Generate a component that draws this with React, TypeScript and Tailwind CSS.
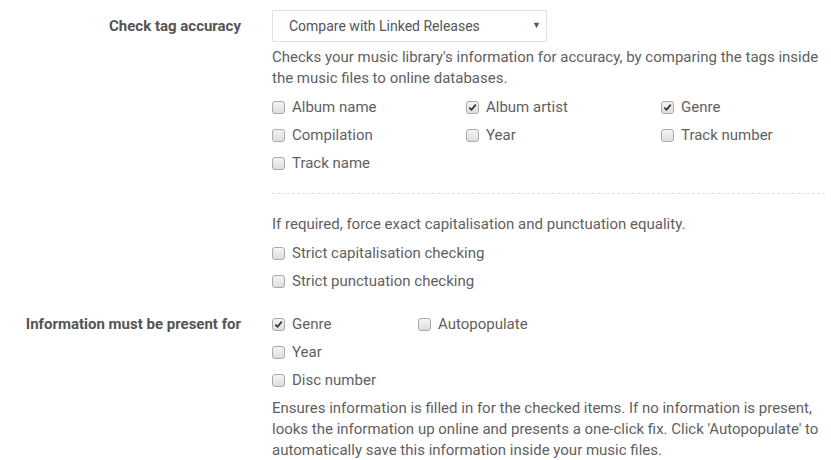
import React from 'react';

interface CheckProps {
  label: string;
  checked?: boolean;
}

function Check({ label, checked = false }: CheckProps) {
  return (
    <label className="flex h-[28px] items-center gap-[7px] whitespace-nowrap">
      <span className="relative flex h-[13px] w-[13px] shrink-0 items-center justify-center rounded-[3px] border border-[#a9a9a9] bg-gradient-to-b from-[#f4f4f4] to-[#dedede]">
        {checked && (
          <svg viewBox="0 0 10 10" className="h-[9px] w-[9px]">
            <path d="M1.5 5.2 L3.9 7.6 L8.6 1.8" fill="none" stroke="#333" strokeWidth={1.9} />
          </svg>
        )}
      </span>
      <span>{label}</span>
    </label>
  );
}

export default function App() {
  return (
    <div
      className="min-h-[460px] w-[831px] bg-white text-[15px] text-[#5f5f5f]"
      style={{ fontFamily: 'Roboto, "Liberation Sans", sans-serif' }}
    >
      <div className="grid grid-cols-[241px_553px] gap-x-[31px] pt-[10px]">
        {/* Check tag accuracy */}
        <div className="flex h-[32px] items-center justify-end font-bold text-[#555]">
          Check tag accuracy
        </div>
        <div className="flex flex-col">
          <div className="relative flex h-[32px] w-[275px] items-center border border-[#e3e3e3] pl-[16px] text-[14px] text-[#555]">
            Compare with Linked Releases
            <span className="absolute right-[5px] top-[8px] text-[9px] text-[#555]">▼</span>
          </div>
          <p className="mt-[5px] leading-[21px]">
            Checks your music library's information for accuracy, by comparing the tags inside the music files to online databases.
          </p>
          <div className="mt-[4px] grid grid-cols-[194px_195px_1fr]">
            <Check label="Album name" />
            <Check label="Album artist" checked />
            <Check label="Genre" checked />
            <Check label="Compilation" />
            <Check label="Year" />
            <Check label="Track number" />
            <Check label="Track name" />
          </div>
          <div className="mt-[16px] border-t border-dashed border-[#e2e2e2]" />
          <p className="mt-[20px] leading-[21px]">
            If required, force exact capitalisation and punctuation equality.
          </p>
          <div className="mt-[4px] flex flex-col">
            <Check label="Strict capitalisation checking" />
            <Check label="Strict punctuation checking" />
          </div>
        </div>

        {/* Information must be present for */}
        <div className="mt-[15px] flex h-[28px] items-center justify-end font-bold text-[#555]">
          Information must be present for
        </div>
        <div className="mt-[15px] flex flex-col">
          <div className="grid grid-cols-[146px_1fr]">
            <Check label="Genre" checked />
            <Check label="Autopopulate" />
            <Check label="Year" />
            <div />
            <Check label="Disc number" />
          </div>
          <p className="mt-[4px] leading-[21px]">
            Ensures information is filled in for the checked items. If no information is present, looks the information up online and presents a one-click fix. Click 'Autopopulate' to automatically save this information inside your music files.
          </p>
        </div>
      </div>
    </div>
  );
}
